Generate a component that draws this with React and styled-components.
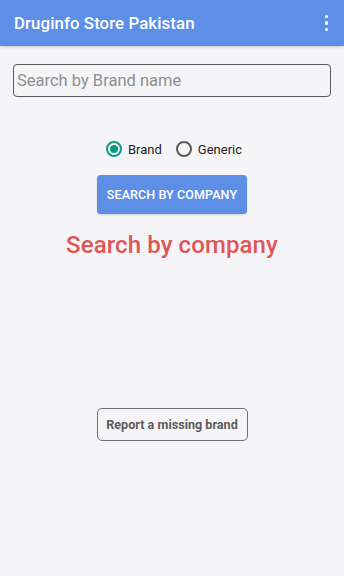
import React, { useState } from "react";
import styled, { createGlobalStyle } from "styled-components";

const Global = createGlobalStyle`
  html, body { margin: 0; padding: 0; background: #f5f5f7; }
  body { font-family: Roboto, "Noto Sans", sans-serif; }
  * { box-sizing: border-box; }
`;

const Page = styled.div`
  width: 344px;
  height: 576px;
  background: #f5f5f7;
  display: flex;
  flex-direction: column;
  overflow: hidden;
`;

const AppBar = styled.header`
  height: 46px;
  background: #5e8fe7;
  display: flex;
  align-items: center;
  justify-content: space-between;
  padding: 0 14px 0 14px;
  box-shadow: 0 1px 3px rgba(0, 0, 0, 0.18);
  flex-shrink: 0;
`;

const Title = styled.h1`
  margin: 0;
  color: #ffffff;
  font-size: 16.8px;
  font-weight: 500;
  letter-spacing: 0.1px;
`;

const Kebab = styled.div`
  display: flex;
  flex-direction: column;
  gap: 3px;
  margin-right: 2px;
`;

const Dot = styled.span`
  width: 3.5px;
  height: 3.5px;
  border-radius: 50%;
  background: #ffffff;
`;

const Content = styled.main`
  display: flex;
  flex-direction: column;
  align-items: center;
  padding: 18px 13px 0 13px;
`;

const SearchInput = styled.input`
  width: 318px;
  height: 33px;
  border: 1px solid #5a5a5a;
  border-radius: 4px;
  background: transparent;
  font-family: Roboto, sans-serif;
  font-size: 16.5px;
  padding: 0 3px;
  color: #333;
  outline: none;
  &::placeholder { color: #8e8e8e; }
`;

const RadioRow = styled.div`
  display: flex;
  align-items: center;
  gap: 14px;
  margin-top: 44px;
  margin-left: 4px;
`;

const RadioLabel = styled.label`
  display: flex;
  align-items: center;
  gap: 6px;
  font-size: 13px;
  color: #222;
`;

const RadioCircle = styled.span`
  width: 16px;
  height: 16px;
  border-radius: 50%;
  border: 2px solid ${(p) => (p.$checked ? "#0f9a84" : "#5b5b5b")};
  display: flex;
  align-items: center;
  justify-content: center;
  &::after {
    content: "";
    width: 8px;
    height: 8px;
    border-radius: 50%;
    background: ${(p) => (p.$checked ? "#0f9a84" : "transparent")};
  }
`;

const PrimaryButton = styled.button`
  margin-top: 18px;
  width: 150px;
  height: 39px;
  border: none;
  border-radius: 4px;
  background: #5e8fe7;
  color: #fff;
  font-family: Roboto, sans-serif;
  font-size: 12.5px;
  font-weight: 500;
  letter-spacing: 0.1px;
  box-shadow: 0 1px 2px rgba(0, 0, 0, 0.15);
`;

const Heading = styled.h2`
  margin: 17px 0 0 0;
  color: #e05656;
  font-size: 24px;
  font-weight: 500;
  letter-spacing: 0.1px;
`;

const OutlineButton = styled.button`
  margin-top: 149px;
  width: 151px;
  height: 33px;
  border: 1px solid #707070;
  border-radius: 5px;
  background: transparent;
  color: #5c5c5c;
  font-family: Roboto, sans-serif;
  font-size: 12.6px;
  font-weight: 700;
`;

export default function App() {
  const [mode, setMode] = useState("brand");
  return (
    <Page>
      <Global />
      <AppBar>
        <Title>Druginfo Store Pakistan</Title>
        <Kebab>
          <Dot />
          <Dot />
          <Dot />
        </Kebab>
      </AppBar>
      <Content>
        <SearchInput placeholder="Search by Brand name" />
        <RadioRow>
          <RadioLabel onClick={() => setMode("brand")}>
            <RadioCircle $checked={mode === "brand"} />
            Brand
          </RadioLabel>
          <RadioLabel onClick={() => setMode("generic")}>
            <RadioCircle $checked={mode === "generic"} />
            Generic
          </RadioLabel>
        </RadioRow>
        <PrimaryButton>SEARCH BY COMPANY</PrimaryButton>
        <Heading>Search by company</Heading>
        <OutlineButton>Report a missing brand</OutlineButton>
      </Content>
    </Page>
  );
}
